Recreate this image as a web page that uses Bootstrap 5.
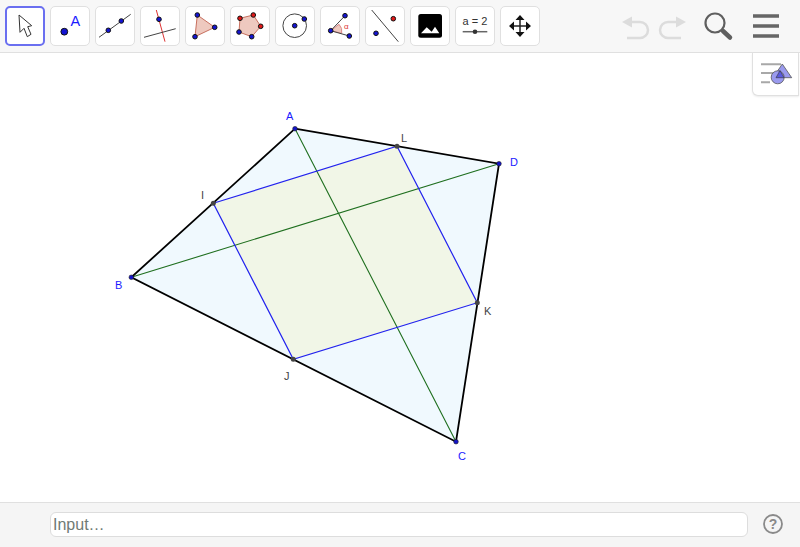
<!DOCTYPE html>
<html lang="en">
<head>
    <meta charset="UTF-8">
    <meta name="viewport" content="width=device-width, initial-scale=1.0">
    <title>Quadrilateral</title>
    <link href="https://cdn.jsdelivr.net/npm/bootstrap@5.3.0/dist/css/bootstrap.min.css" rel="stylesheet">
    <style>
        html, body { height: 100%; overflow: hidden; background: #fff; }
        body { font-family: "Liberation Sans", Arial, sans-serif; }
        .app { height: 547px; }
        .toolbar { height: 53px; padding: 6px 0 0 5px; background: #f7f7f7; border-bottom: 1px solid #e0e0e0; }
        .tool { width: 40px; height: 40px; padding: 0; background: #fff; border: 1px solid #e0e0e0; border-radius: 5px; margin-right: 5px; }
        .tool svg { display: block; width: 38px; height: 38px; }
        .tool.active { border: 2px solid #6a6ff0; }
        .tool.active svg { margin: -1px; }
        .tool-text { font-family: "Liberation Sans", Arial, sans-serif; font-size: 11px; fill: #333; }
        .right-tools { margin-left: auto; margin-right: 15px; }
        .right-tools svg { display: block; }
        .canvas { min-height: 0; }
        .board { display: block; width: 800px; height: 449px; }
        .lbl { font-family: "Liberation Sans", Arial, sans-serif; font-size: 11px; }
        .lbl-blue { fill: #1a1aff; }
        .lbl-grey { fill: #444; }
        .style-btn { position: absolute; top: 0; right: 1px; width: 47px; height: 43px; background: #fff; border: 1px solid #e0e0e0; border-top: 0; border-radius: 0 0 0 6px; box-shadow: 0 1px 2px rgba(0,0,0,.08); }
        .style-btn svg { display: block; }
        .inputbar { height: 45px; background: #f5f5f5; border-top: 1px solid #e0e0e0; padding: 9px 16px 0 50px; }
        .input-box { flex: 1; min-width: 0; height: 25px; padding: 0 2px; font-size: 16px; line-height: 23px; color: #666; background: #fff; border: 1px solid #ddd; border-radius: 6px; box-shadow: none; font-family: "Liberation Sans", Arial, sans-serif; }
        .input-box::placeholder { color: #6f7a75; opacity: 1; }
        .help { margin-left: 14px; margin-top: 1px; }
    </style>
</head>
<body>
<div class="app d-flex flex-column position-relative">

    <div class="toolbar d-flex">
        <button class="tool active"><svg viewBox="0 0 38 38"><path d="M13 8L14 25.300L18 21.300L21.300 29.700L25 27.300L21.700 19.700L25.700 18.700Z" fill="#fff" stroke="#333" stroke-width="1"/></svg></button>
        <button class="tool"><svg viewBox="0 0 38 38"><circle cx="13.300" cy="24.700" r="3.400" fill="#1414d2" stroke="#111"/><text x="19.500" y="18.700" font-family="Liberation Sans" font-size="14.500" fill="#1a1aff">A</text></svg></button>
        <button class="tool"><svg viewBox="0 0 38 38"><path d="M3 30.300L34.700 7.300" stroke="#444"/><circle cx="12.300" cy="23.300" r="2.300" fill="#1414d2" stroke="#111"/><circle cx="25.300" cy="14" r="2.300" fill="#1414d2" stroke="#111"/></svg></button>
        <button class="tool"><svg viewBox="0 0 38 38"><path d="M15.300 3L24 34.700" stroke="#d33" /><path d="M3 30.300L34.700 21.700" stroke="#444"/><circle cx="18" cy="12.300" r="2.300" fill="#1414d2" stroke="#111"/></svg></button>
        <button class="tool"><svg viewBox="0 0 38 38"><path d="M11.300 8L28.700 20.300L9 29.700Z" fill="#eec9bf" stroke="#c8705f"/><circle cx="11.300" cy="8" r="2.300" fill="#1414d2" stroke="#111"/><circle cx="28.700" cy="20.300" r="2.300" fill="#1414d2" stroke="#111"/><circle cx="9" cy="29.700" r="2.300" fill="#1414d2" stroke="#111"/></svg></button>
        <button class="tool"><svg viewBox="0 0 38 38"><path d="M9 11.300L22.300 8L29.700 19.300L20.700 29.700L8 25Z" fill="#eec9bf" stroke="#c8705f"/><circle cx="9" cy="11.300" r="2.300" fill="#e01818" stroke="#111"/><circle cx="22.300" cy="8" r="2.300" fill="#e01818" stroke="#111"/><circle cx="29.700" cy="19.300" r="2.300" fill="#e01818" stroke="#111"/><circle cx="20.700" cy="29.700" r="2.300" fill="#1414d2" stroke="#111"/><circle cx="8" cy="25" r="2.300" fill="#1414d2" stroke="#111"/></svg></button>
        <button class="tool"><svg viewBox="0 0 38 38"><circle cx="18.700" cy="18.700" r="11.800" fill="none" stroke="#444"/><circle cx="18.700" cy="18.700" r="2.300" fill="#1414d2" stroke="#111"/><circle cx="28.300" cy="12" r="2.300" fill="#1414d2" stroke="#111"/></svg></button>
        <button class="tool"><svg viewBox="0 0 38 38"><path d="M9.700 23.700L18 17.300A10 10 0 0 1 20.700 26.300Z" fill="#eec9bf" stroke="#d88"/><path d="M24 8.700L9.700 23.700L28.300 29" fill="none" stroke="#444"/><circle cx="24" cy="8.700" r="2.300" fill="#1414d2" stroke="#111"/><circle cx="9.700" cy="23.700" r="2.300" fill="#1414d2" stroke="#111"/><circle cx="28.300" cy="29" r="2.300" fill="#1414d2" stroke="#111"/><text x="23" y="22" font-family="Liberation Sans" font-size="8" fill="#d33">α</text></svg></button>
        <button class="tool"><svg viewBox="0 0 38 38"><path d="M5.700 3L32.300 34.700" stroke="#444"/><circle cx="27.300" cy="11.700" r="2.300" fill="#e01818" stroke="#111"/><circle cx="10" cy="26.300" r="2.300" fill="#1414d2" stroke="#111"/></svg></button>
        <button class="tool"><svg viewBox="0 0 38 38"><rect x="7.300" y="7" width="23.700" height="23.700" rx="2.500" fill="#000"/><path d="M10 26.300L15.700 20.300L20.700 24.700L24 19.700L28.300 26.300Z" fill="#fff"/></svg></button>
        <button class="tool"><svg viewBox="0 0 38 38"><text x="19" y="18" text-anchor="middle" class="tool-text">a = 2</text><path d="M6.700 24.700H31.300" stroke="#666" stroke-width="1.500"/><circle cx="19" cy="24.700" r="2.300" fill="#333"/></svg></button>
        <button class="tool"><svg viewBox="0 0 38 38"><path d="M19 11V27M11 19H27" stroke="#222" stroke-width="1.500"/><path d="M19 8L14.500 13H23.500ZM19 30L14.500 25H23.500ZM8 19L13 14.500V23.500ZM30 19L25 14.500V23.500Z" fill="#111"/></svg></button>

        <div class="right-tools d-flex align-items-start">
            <svg width="165" height="46" viewBox="0 0 165 46">
                <g fill="none" stroke="#dcdcdc" stroke-width="2.500">
                    <path d="M8 16H20A8 8 0 0 1 20 32H7"/>
                    <path d="M60 16H48A8 8 0 0 0 48 32H61"/>
                </g>
                <path d="M2 16L12 10.500V21.500Z" fill="#dcdcdc"/>
                <path d="M66 16L56 10.500V21.500Z" fill="#dcdcdc"/>
                <circle cx="95" cy="17" r="9.500" fill="none" stroke="#5f5f5f" stroke-width="2.200"/>
                <path d="M103 25L110 31.500" stroke="#5f5f5f" stroke-width="4.500" stroke-linecap="round"/>
                <path d="M133 10H159M133 20H159M133 30H159" stroke="#666" stroke-width="3.400"/>
            </svg>
        </div>
    </div>

    <div class="canvas flex-grow-1 position-relative">
        <svg class="board" viewBox="0 53 800 449">
            <path d="M295 128.700L499 163.700L456 441.700L131.300 277.300Z" fill="#f0f9fe"/>
            <path d="M213.300 203.300L397 146.300L477.300 302.700L293.300 359.300Z" fill="#f1f6e7"/>
            <path d="M295 128.700L456 441.700M131.300 277.300L499 163.700" fill="none" stroke="#1f6f1f" stroke-width="1.100"/>
            <path d="M213.300 203.300L397 146.300L477.300 302.700L293.300 359.300Z" fill="none" stroke="#2222ee" stroke-width="1.200"/>
            <path d="M295 128.700L499 163.700L456 441.700L131.300 277.300Z" fill="none" stroke="#000" stroke-width="1.800"/>
            <g fill="#1414c8" stroke="#222" stroke-width=".6">
                <circle cx="295" cy="128.700" r="2.300"/>
                <circle cx="131.300" cy="277.300" r="2.300"/>
                <circle cx="456" cy="441.700" r="2.300"/>
                <circle cx="499" cy="163.700" r="2.300"/>
            </g>
            <g fill="#444">
                <circle cx="213.300" cy="203.300" r="2.500"/>
                <circle cx="397" cy="146.300" r="2.500"/>
                <circle cx="477.300" cy="302.700" r="2.500"/>
                <circle cx="293.300" cy="359.300" r="2.500"/>
            </g>
            <text x="286" y="120" class="lbl lbl-blue">A</text>
            <text x="115" y="289" class="lbl lbl-blue">B</text>
            <text x="458" y="460" class="lbl lbl-blue">C</text>
            <text x="510" y="166" class="lbl lbl-blue">D</text>
            <text x="201" y="199" class="lbl lbl-grey">I</text>
            <text x="284" y="380" class="lbl lbl-grey">J</text>
            <text x="484" y="315" class="lbl lbl-grey">K</text>
            <text x="401" y="142" class="lbl lbl-grey">L</text>
        </svg>
        <div class="style-btn">
            <svg width="45" height="42" viewBox="0 0 45 42">
                <path d="M8 11.300H28M8 20H22M8 29.300H17" stroke="#a8a8a8" stroke-width="2"/>
                <path d="M29.300 11L38.700 24.700H20Z" fill="#9a9aee" stroke="#555" stroke-width=".8"/>
                <circle cx="24.700" cy="24.300" r="6.500" fill="#9a9aee" stroke="#555" stroke-width=".8"/>
                <path d="M27 17.500L31 24.700H23Z" fill="#5a5ae0" stroke="#333" stroke-width=".6"/>
            </svg>
        </div>
    </div>

    <div class="inputbar d-flex align-items-start">
        <input type="text" class="input-box" placeholder="Input…">
        <svg class="help" width="22" height="22" viewBox="0 0 22 22">
            <circle cx="11" cy="11" r="9" fill="none" stroke="#8a8a8a" stroke-width="1.800"/>
            <text x="11" y="16" text-anchor="middle" font-family="Liberation Sans" font-size="14" font-weight="700" fill="#8a8a8a">?</text>
        </svg>
    </div>
</div>
<script src="https://cdn.jsdelivr.net/npm/bootstrap@5.3.0/dist/js/bootstrap.bundle.min.js"></script>
</body>
</html>
